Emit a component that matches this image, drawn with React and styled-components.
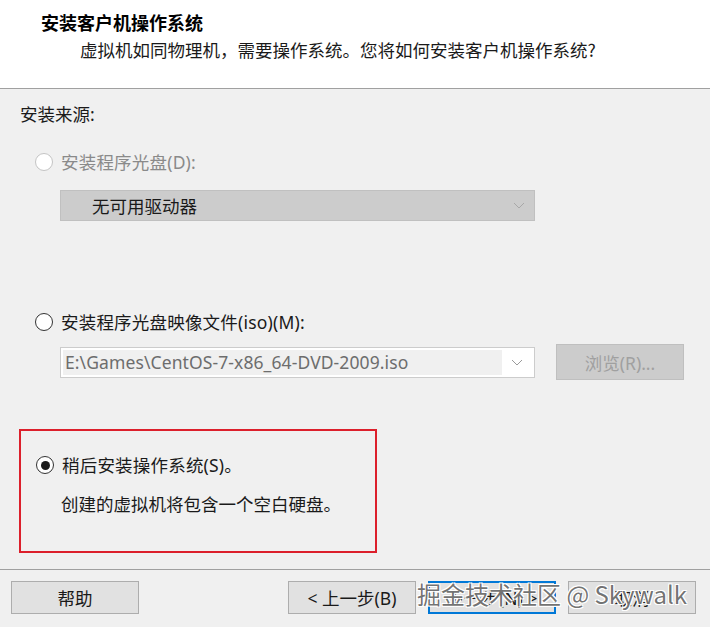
import React from "react";
import styled, { createGlobalStyle } from "styled-components";

const GlobalStyle = createGlobalStyle`
  html, body {
    margin: 0;
    padding: 0;
    background: #f0f0f0;
  }
  body {
    font-family: "Noto Sans", "Noto Sans CJK SC", sans-serif;
    color: #1a1a1a;
  }
`;

const Window = styled.div`
  position: relative;
  width: 710px;
  height: 627px;
  background: #f0f0f0;
  overflow: hidden;
  display: flex;
  flex-direction: column;
`;

const Header = styled.div`
  height: 89px;
  background: #ffffff;
  border-bottom: 1px solid #a0a0a0;
  box-sizing: border-box;
  padding: 10px 0 0 41px;
`;

const Title = styled.div`
  font-family: "Noto Sans CJK SC", sans-serif;
  font-weight: 700;
  font-size: 18px;
  line-height: 24px;
  color: #000;
`;

const Subtitle = styled.div`
  font-family: "Noto Sans CJK SC", sans-serif;
  font-size: 17.5px;
  line-height: 24px;
  margin: 4px 0 0 39px;
  color: #1a1a1a;
`;

const Body = styled.div`
  flex: 1;
  display: flex;
  flex-direction: column;
  padding: 13px 0 0 20px;
`;

const SectionLabel = styled.div`
  font-size: 17.5px;
  line-height: 24px;
  color: #1a1a1a;
`;

const RadioRow = styled.label`
  display: flex;
  align-items: center;
  gap: 8px;
  margin: ${(p) => p.$mt || 0}px 0 0 15px;
  font-size: 17.5px;
  line-height: 24px;
  letter-spacing: 0.2px;
  color: ${(p) => (p.$disabled ? "#8a8a8a" : "#1a1a1a")};
`;

const Radio = styled.span`
  width: 18px;
  height: 18px;
  box-sizing: border-box;
  border-radius: 50%;
  border: 1.5px solid ${(p) => (p.$disabled ? "#c4c4c4" : "#333")};
  background: #fff;
  display: flex;
  align-items: center;
  justify-content: center;
  flex-shrink: 0;

  &::after {
    content: "";
    display: ${(p) => (p.$checked ? "block" : "none")};
    width: 9px;
    height: 9px;
    border-radius: 50%;
    background: #1a1a1a;
  }
`;

const FieldRow = styled.div`
  display: flex;
  align-items: center;
  gap: 21px;
  margin: ${(p) => p.$mt || 0}px 0 0 40px;
`;

const Select = styled.div`
  width: 475px;
  height: 31px;
  box-sizing: border-box;
  display: flex;
  align-items: center;
  border: 1px solid ${(p) => (p.$disabled ? "#c0c0c0" : "#cccccc")};
  background: ${(p) => (p.$disabled ? "#cccccc" : "#ffffff")};
  padding: ${(p) => (p.$disabled ? "0 0 0 31px" : "2px")};
  font-size: 17.5px;
  color: #1a1a1a;
`;

const SelectText = styled.span`
  flex: 1;
  height: 100%;
  display: flex;
  align-items: center;
  white-space: nowrap;
  overflow: hidden;
`;

const PathField = styled(SelectText)`
  background: #f0f0f0;
  padding-left: 2px;
  color: #6d6d6d;
  font-size: 17.5px;
  letter-spacing: 0.1px;
`;

const Chevron = styled.span`
  width: 30px;
  display: flex;
  align-items: center;
  justify-content: center;
  color: ${(p) => (p.$dim ? "#a8a8a8" : "#9a9a9a")};
`;

const Button = styled.button`
  width: 128px;
  height: ${(p) => p.$h || 33}px;
  box-sizing: border-box;
  border: ${(p) => (p.$focus ? "2px" : "1px")} solid
    ${(p) => (p.$disabled ? "#bfbfbf" : p.$focus ? "#0078d7" : "#adadad")};
  background: ${(p) => (p.$disabled ? "#cccccc" : "#e1e1e1")};
  color: ${(p) => (p.$disabled ? "#a0a0a0" : "#1a1a1a")};
  font-family: "Noto Sans", "Noto Sans CJK SC", sans-serif;
  font-size: 17.5px;
  padding: 0;
  display: flex;
  align-items: center;
  justify-content: center;
`;

const Highlight = styled.div`
  width: 358px;
  height: 124px;
  box-sizing: border-box;
  margin: 49px 0 0 -1px;
  border: 2px solid #dc1f2b;
  display: flex;
  flex-direction: column;
  padding-top: 22px;
`;

const Note = styled.div`
  margin: 15px 0 0 40px;
  font-size: 17.5px;
  line-height: 24px;
  color: #1a1a1a;
`;

const Footer = styled.div`
  border-top: 1px solid #a0a0a0;
  height: 58px;
  box-sizing: border-box;
  display: flex;
  align-items: center;
  padding: 0 14px 2px 11px;
`;

const NavGroup = styled.div`
  margin-left: auto;
  display: flex;
  gap: 12px;
`;

const Watermark = styled.div`
  position: absolute;
  left: 417px;
  top: 578px;
  font-family: "Noto Sans CJK SC", "Noto Sans", sans-serif;
  font-size: 24px;
  line-height: 32px;
  color: rgba(90, 90, 90, 0.85);
  white-space: nowrap;
  text-shadow: 1px 1px 0 #fff, -1px -1px 0 #fff, 1px -1px 0 #fff, -1px 1px 0 #fff;
  pointer-events: none;
`;

function ChevronIcon() {
  return (
    <svg width="12" height="7" viewBox="0 0 12 7">
      <path d="M1 1l5 5 5-5" fill="none" stroke="currentColor" strokeWidth="1" />
    </svg>
  );
}

export default function App() {
  return (
    <>
      <GlobalStyle />
      <Window>
        <Header>
          <Title>安装客户机操作系统</Title>
          <Subtitle>虚拟机如同物理机，需要操作系统。您将如何安装客户机操作系统?</Subtitle>
        </Header>
        <Body>
          <SectionLabel>安装来源:</SectionLabel>
          <RadioRow $mt={24} $disabled>
            <Radio $disabled />
            安装程序光盘(D):
          </RadioRow>
          <FieldRow $mt={16}>
            <Select $disabled>
              <SelectText>无可用驱动器</SelectText>
              <Chevron $dim>
                <ChevronIcon />
              </Chevron>
            </Select>
          </FieldRow>
          <RadioRow $mt={89}>
            <Radio />
            安装程序光盘映像文件(iso)(M):
          </RadioRow>
          <FieldRow $mt={10}>
            <Select>
              <PathField>E:\Games\CentOS-7-x86_64-DVD-2009.iso</PathField>
              <Chevron>
                <ChevronIcon />
              </Chevron>
            </Select>
            <Button $disabled $h={36}>
              浏览(R)...
            </Button>
          </FieldRow>
          <Highlight>
            <RadioRow>
              <Radio $checked />
              稍后安装操作系统(S)。
            </RadioRow>
            <Note>创建的虚拟机将包含一个空白硬盘。</Note>
          </Highlight>
        </Body>
        <Footer>
          <Button>帮助</Button>
          <NavGroup>
            <Button>&lt; 上一步(B)</Button>
            <Button $focus>下一步(N) &gt;</Button>
            <Button>取消</Button>
          </NavGroup>
        </Footer>
        <Watermark>掘金技术社区 @ Skywalk</Watermark>
      </Window>
    </>
  );
}
